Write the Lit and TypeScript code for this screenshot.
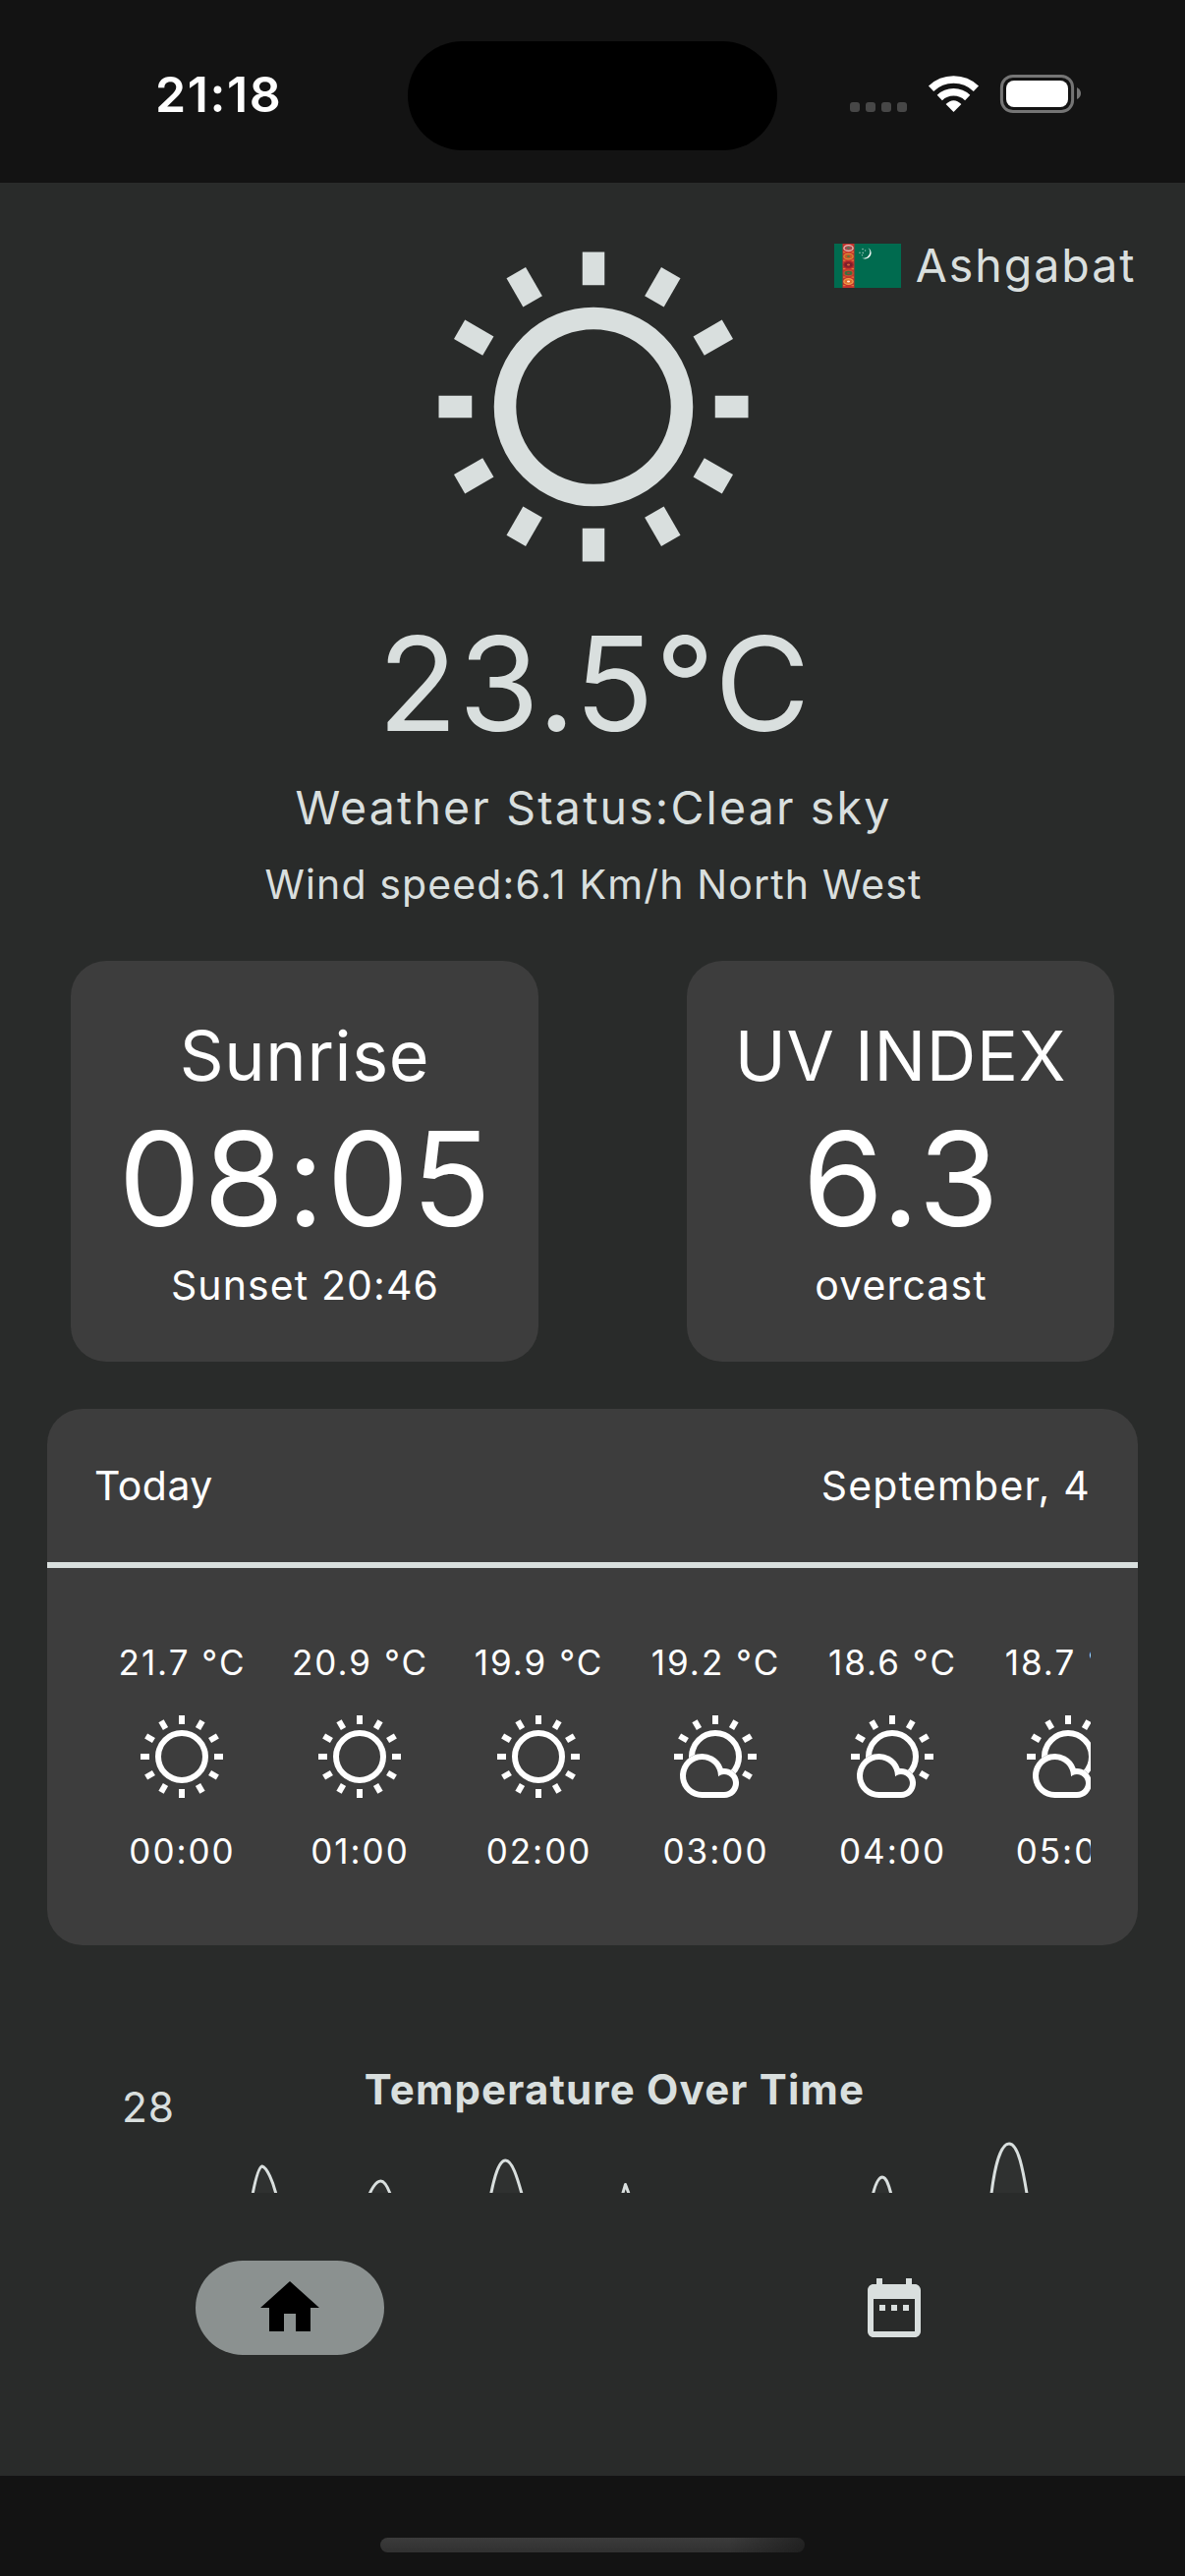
import { LitElement, html, svg, css } from "lit";
import { customElement, property } from "lit/decorators.js";

type Sky = "clear" | "partly";

interface Hour {
  temp: string;
  sky: Sky;
  time: string;
}

const HOURS: Hour[] = [
  { temp: "21.7 °C", sky: "clear", time: "00:00" },
  { temp: "20.9 °C", sky: "clear", time: "01:00" },
  { temp: "19.9 °C", sky: "clear", time: "02:00" },
  { temp: "19.2 °C", sky: "partly", time: "03:00" },
  { temp: "18.6 °C", sky: "partly", time: "04:00" },
  { temp: "18.7 °C", sky: "partly", time: "05:00" },
];

const CLEAR_RAYS = [0, 30, 60, 90, 120, 150, 180, 210, 240, 270, 300, 330];
const PARTLY_RAYS = [0, 30, 60, 90, 120, 270, 300, 330];

const CLOUD_OUTER = "M5.75 15A3.75 3.75 0 1 1 9.29 10.01A2.5 2.5 0 1 1 9.5 15Z";
const CLOUD_INNER = "M5.75 14A2.75 2.75 0 1 1 8.5 11.25L8.5 11.38A1.5 1.5 0 1 1 9.5 14Z";

/** Sun, optionally half covered by a cloud, on a 16-unit grid. */
@customElement("sky-icon")
export class SkyIcon extends LitElement {
  @property() sky: Sky = "clear";

  static styles = css`
    :host { display: block; }
    svg { display: block; width: 100%; height: 100%; }
    .behind { fill: #3d3d3d; }
  `;

  render() {
    const rays = this.sky === "clear" ? CLEAR_RAYS : PARTLY_RAYS;
    return html`<svg viewBox="0 0 16 16" fill="currentColor">
      <circle cx="8" cy="8" r="4" fill="none" stroke="currentColor" stroke-width="1" />
      ${rays.map((a) => svg`<rect x="7.5" y="1" width="1" height="1.5" transform="rotate(${a} 8 8)" />`)}
      ${this.sky === "partly"
        ? svg`<path class="behind" d=${CLOUD_OUTER} /><path fill-rule="evenodd" d=${CLOUD_OUTER + CLOUD_INNER} />`
        : ""}
    </svg>`;
  }
}

@customElement("status-bar")
export class StatusBar extends LitElement {
  static styles = css`
    :host {
      display: grid;
      grid-template-columns: 415px 376px 1fr;
      height: 186px;
      background: #131313;
      color: #fff;
    }
    .time {
      padding: 66px 0 0 158px;
      font-size: 50px;
      font-weight: 600;
      line-height: 60px;
      letter-spacing: 1.6px;
    }
    .island { margin-top: 42px; height: 111px; border-radius: 56px; background: #000; }
    .system { margin: 66px 0 0 59px; width: 260px; height: 60px; display: block; }
  `;

  render() {
    return html`
      <div class="time">21:18</div>
      <div class="island"></div>
      <svg class="system" viewBox="0 0 260 60">
        ${[15, 31, 47, 63].map((x) => svg`<rect x=${x} y="38" width="10" height="10" rx="3" fill="#474747" />`)}
        <g fill="none" stroke="#fff" stroke-width="7.6">
          <path d="M97.6 24.2A33.2 33.2 0 0 1 143.4 24.2" />
          <path d="M106.3 33.4A20.6 20.6 0 0 1 134.7 33.4" />
        </g>
        <path d="M112.6 40Q120.5 32.4 128.4 40L120.5 48Z" fill="#fff" />
        <rect x="169.4" y="11.4" width="72.2" height="36.2" rx="11.5" fill="none" stroke="#757575" stroke-width="3" />
        <rect x="174" y="16" width="63" height="27" rx="8" fill="#fff" />
        <path d="M246 23Q250 25 250 29Q250 33 246 35Z" fill="#757575" />
      </svg>
    `;
  }
}

@customElement("info-card")
export class InfoCard extends LitElement {
  @property() heading = "";
  @property() value = "";
  @property() note = "";

  static styles = css`
    :host {
      display: block;
      box-sizing: border-box;
      height: 408px;
      padding-top: 54px;
      border-radius: 36px;
      background: #3d3d3d;
      color: #fff;
      text-align: center;
      white-space: nowrap;
    }
    .heading { font-size: 70px; line-height: 85px; letter-spacing: 0.7px; }
    .value { margin-top: 5px; padding-left: 3px; font-size: 133px; line-height: 156px; letter-spacing: 2.5px; }
    .note { margin-top: 5px; padding-left: 1px; font-size: 41px; line-height: 50px; letter-spacing: 1.1px; }
  `;

  render() {
    return html`
      <div class="heading">${this.heading}</div>
      <div class="value">${this.value}</div>
      <div class="note">${this.note}</div>
    `;
  }
}

@customElement("today-card")
export class TodayCard extends LitElement {
  static styles = css`
    :host {
      display: block;
      box-sizing: border-box;
      height: 546px;
      margin: 48px 48px 0;
      border-radius: 36px;
      background: #3d3d3d;
      color: #fff;
    }
    .head {
      display: flex;
      justify-content: space-between;
      align-items: center;
      height: 156px;
      padding: 0 48px;
      border-bottom: 6px solid #d9dfde;
      font-size: 41px;
      letter-spacing: 1.2px;
    }
    .day { letter-spacing: 0.5px; }
    .hours {
      display: grid;
      grid-template-columns: 178px 184px 180px 180px 180px 178px;
      margin: 0 48px;
      padding-top: 72px;
      overflow: hidden;
    }
    .hour {
      display: flex;
      flex-direction: column;
      align-items: center;
      gap: 24px;
      font-size: 35px;
      line-height: 48px;
      letter-spacing: 2px;
      white-space: nowrap;
    }
    .label { padding-left: 1px; }
    .icon { width: 96px; height: 96px; }
  `;

  render() {
    return html`
      <div class="head"><span class="day">Today</span><span>September, 4</span></div>
      <div class="hours">
        ${HOURS.map(
          (h) => html`<div class="hour">
            <span class="label">${h.temp}</span>
            <sky-icon class="icon" .sky=${h.sky}></sky-icon>
            <span class="label">${h.time}</span>
          </div>`,
        )}
      </div>
    `;
  }
}

@customElement("temperature-chart")
export class TemperatureChart extends LitElement {
  static styles = css`
    :host {
      display: grid;
      grid-template-columns: 210px 831px 165px;
      height: 252px;
      overflow: hidden;
      color: #d9dfde;
    }
    .tick, .title, .line { grid-row: 1; }
    .tick { grid-column: 1; padding: 140px 0 0 124px; font-size: 42.5px; line-height: 50px; letter-spacing: 0.9px; }
    .title {
      grid-column: 2;
      padding-top: 122px;
      text-align: center;
      font-size: 42px;
      font-weight: 700;
      line-height: 50px;
      letter-spacing: 1.18px;
    }
    .line { grid-column: 1 / -1; display: block; width: 1206px; height: 252px; }
  `;

  render() {
    return html`
      <svg class="line" viewBox="0 0 1206 252" fill="#2f3130" stroke="#d9dfde" stroke-width="3" stroke-linejoin="round">
        <path d="M255.5 262C259 242 263 226 266.7 225C271 226 278 238 283 262" />
        <path d="M373 262C377 248 383 240 387.5 240C392 240 396 248 400 262" />
        <path d="M498 262C503 234 508 219 514.5 219C521 219 526 234 533.5 262" />
        <path d="M631 262L636.5 243.5L643.5 262" />
        <path d="M886.5 262C890 244 894 236 898 236C902 236 905 244 909 262" />
        <path d="M1008 262C1012 222 1019 202 1027 202C1036 202 1041 226 1046.5 262" />
      </svg>
      <div class="tick">28</div>
      <div class="title">Temperature Over Time</div>
    `;
  }
}

@customElement("bottom-nav")
export class BottomNav extends LitElement {
  static styles = css`
    :host {
      display: flex;
      gap: 423px;
      box-sizing: border-box;
      height: 288px;
      padding: 69px 0 0 199px;
    }
    .item {
      display: flex;
      align-items: center;
      justify-content: center;
      width: 192px;
      height: 96px;
      border-radius: 48px;
      color: #d9dfde;
    }
    .active { background: #8b9190; color: #000; }
    svg { display: block; width: 72px; height: 72px; fill: currentColor; }
  `;

  render() {
    return html`
      <div class="item active">
        <svg viewBox="0 0 24 24"><path d="M10 20v-6h4v6h5v-8h3L12 3 2 12h3v8z" /></svg>
      </div>
      <div class="item">
        <svg viewBox="0 0 24 24">
          <path d="M9 11H7v2h2v-2zm4 0h-2v2h2v-2zm4 0h-2v2h2v-2zm2-7h-1V2h-2v2H8V2H6v2H5c-1.11 0-1.99.9-1.99 2L3 20c0 1.1.89 2 2 2h14c1.1 0 2-.9 2-2V6c0-1.1-.9-2-2-2zm0 16H5V9h14v11z" />
        </svg>
      </div>
    `;
  }
}

@customElement("app-root")
export class AppRoot extends LitElement {
  static styles = css`
    :host {
      display: flex;
      flex-direction: column;
      width: 1206px;
      height: 2622px;
      overflow: hidden;
      background: #292b2a;
      color: #d9dfde;
      font-family: Inter, "Liberation Sans", sans-serif;
    }
    .hero {
      position: relative;
      display: flex;
      flex-direction: column;
      align-items: center;
      padding: 48px 0 0 2px;
      white-space: nowrap;
    }
    .city {
      position: absolute;
      top: 54px;
      right: 49.5px;
      display: flex;
      align-items: center;
      gap: 15px;
      font-size: 46.5px;
      line-height: 60px;
      letter-spacing: 1.97px;
    }
    .flag { display: block; width: 68px; height: 45px; }
    .sun { width: 360px; height: 360px; }
    .temp { margin-top: 24px; padding-left: 2px; font-size: 133px; line-height: 156px; letter-spacing: 1.2px; }
    .status { margin-top: 18px; font-size: 46.5px; line-height: 60px; letter-spacing: 2.16px; }
    .wind { margin-top: 18px; font-size: 41px; line-height: 60px; letter-spacing: 1.13px; }
    .cards { display: flex; justify-content: space-between; margin-top: 48px; padding: 0 72px; }
    .sunrise { width: 476px; }
    .uv { width: 435px; }
    .gesture { display: flow-root; height: 102px; background: #131313; }
    .handle {
      width: 432px;
      height: 15px;
      margin: 63px auto 0;
      border-radius: 8px;
      background: linear-gradient(100deg, transparent 82%, rgba(19, 19, 19, 0.6)), linear-gradient(#3b3b3b, #313131);
    }
  `;

  private flag() {
    return html`<svg class="flag" viewBox="0 0 68 45">
      <rect width="68" height="45" fill="#006b4f" />
      <rect x="8.5" width="12" height="45" fill="#c5322d" />
      ${[4.5, 13, 21.5, 30, 38.5].map(
        (y, i) => svg`
          <ellipse cx="14.5" cy=${y} rx="4.6" ry="2.9"
            fill=${["#a8474a", "#c9562a", "#7c1f2a", "#3d7040", "#dd6a2c"][i]}
            stroke=${["#e5c0b5", "#d98a34", "#98242c", "#c5522f", "#f0a04c"][i]} stroke-width="1.3" />
          <ellipse cx="14.5" cy=${y} rx="1.6" ry="1.1" fill=${["#4a7a55", "#5a7a3c", "#d9663d", "#a83c34", "#ffe9d6"][i]} />
          <path d="M9 ${y + 4.2}h2.4M17.6 ${y + 4.2}H20" stroke="#e3743a" stroke-width="1.2" />
        `,
      )}
      <path d="M34.5 4.2A6 6 0 1 1 28.2 14.4A6.2 6.2 0 0 0 34.5 4.2Z" fill="#fff" />
      <g fill="#8dbcae">
        <circle cx="29" cy="5.6" r="0.8" /><circle cx="31.6" cy="7" r="0.7" /><circle cx="26" cy="9.2" r="0.8" />
        <circle cx="29.2" cy="9.4" r="0.8" /><circle cx="28.4" cy="11.8" r="0.7" />
      </g>
    </svg>`;
  }

  render() {
    return html`
      <status-bar></status-bar>
      <div class="hero">
        <div class="city">${this.flag()}<span>Ashgabat</span></div>
        <sky-icon class="sun"></sky-icon>
        <div class="temp">23.5°C</div>
        <div class="status">Weather Status:Clear sky</div>
        <div class="wind">Wind speed:6.1 Km/h North West</div>
      </div>
      <div class="cards">
        <info-card class="sunrise" heading="Sunrise" value="08:05" note="Sunset 20:46"></info-card>
        <info-card class="uv" heading="UV INDEX" value="6.3" note="overcast"></info-card>
      </div>
      <today-card></today-card>
      <temperature-chart></temperature-chart>
      <bottom-nav></bottom-nav>
      <div class="gesture"><div class="handle"></div></div>
    `;
  }
}
